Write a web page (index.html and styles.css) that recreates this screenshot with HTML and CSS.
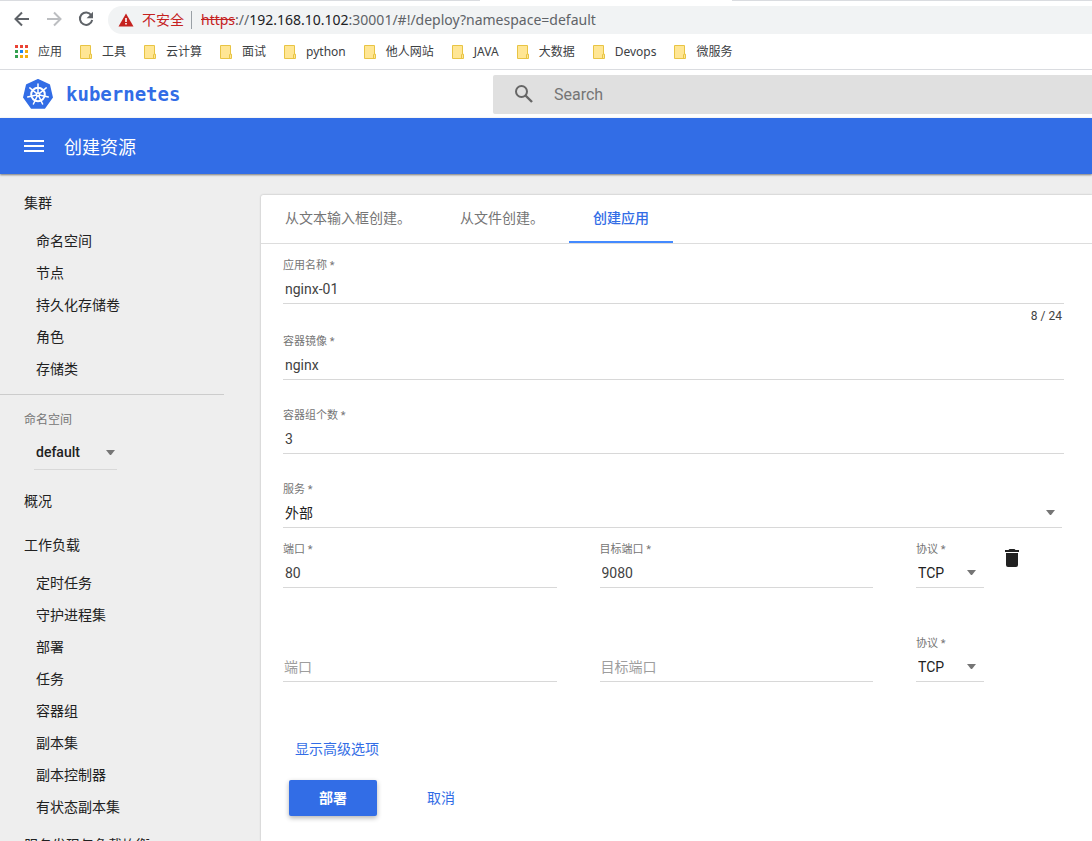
FILE: index.html
```html
<!DOCTYPE html>
<html lang="zh-CN">
<head>
<meta charset="utf-8">
<title>创建资源 - Kubernetes Dashboard</title>
<link rel="stylesheet" href="styles.css">
</head>
<body>
<svg class="sprite" aria-hidden="true">
  <symbol id="folder" viewBox="0 0 12 14"><path d="M.5.5h10v8.700h1v4.300H.5z" fill="#ffe694" stroke="#e8c444"/><path d="M9.500 13V9.500h1" fill="none" stroke="#e8c444"/></symbol>
</svg>
<div class="browser">
  <div class="tabstrip"><span></span><span></span></div>
  <div class="toolbar">
    <button class="nav" aria-label="后退"><svg viewBox="0 0 16 16"><path d="M15 8H2M8 1.500 1.500 8 8 14.500" fill="none" stroke="#5f6368" stroke-width="2"/></svg></button>
    <button class="nav" aria-label="前进"><svg viewBox="0 0 16 16"><path d="M1 8h13M8 1.500 14.500 8 8 14.500" fill="none" stroke="#bcbec1" stroke-width="2"/></svg></button>
    <button class="nav" aria-label="重新加载"><svg viewBox="0 0 16 16"><path d="M13.300 4.200A6.200 6.200 0 1 0 14.200 9" fill="none" stroke="#5f6368" stroke-width="2"/><path d="M15 .8v6.400H8.600z" fill="#5f6368"/></svg></button>
    <div class="omnibox">
      <svg class="warn" viewBox="0 0 16 14"><path d="M8 .5 15.500 13.500H.5z" fill="#c5221f"/><path d="M7.200 5h1.600v4H7.200zM7.200 10h1.600v1.600H7.200z" fill="#fff"/></svg>
      <span class="insecure">不安全</span>
      <span class="url"><s>https</s><span>://</span><b>192.168.10.102</b><span>:30001/#!/deploy?namespace=default</span></span>
    </div>
  </div>
  <nav class="bookmarks">
    <a href="#"><svg class="apps" viewBox="0 0 13 13"><path d="M0 0h3v3H0zM5 0h3v3H5zM10 0h3v3h-3z" fill="#ea4335"/><path d="M0 5h3v3H0zM0 10h3v3H0z" fill="#34a04f"/><path d="M5 5h3v3H5z" fill="#1a85f0"/><path d="M10 5h3v3h-3zM5 10h3v3H5zM10 10h3v3h-3z" fill="#f5ae0c"/></svg>应用</a>
    <a href="#"><svg><use href="#folder"/></svg>工具</a>
    <a href="#"><svg><use href="#folder"/></svg>云计算</a>
    <a href="#"><svg><use href="#folder"/></svg>面试</a>
    <a href="#"><svg><use href="#folder"/></svg>python</a>
    <a href="#"><svg><use href="#folder"/></svg>他人网站</a>
    <a href="#"><svg><use href="#folder"/></svg>JAVA</a>
    <a href="#"><svg><use href="#folder"/></svg>大数据</a>
    <a href="#"><svg><use href="#folder"/></svg>Devops</a>
    <a href="#"><svg><use href="#folder"/></svg>微服务</a>
  </nav>
</div>
<header class="brandbar">
  <a class="brand" href="#">
    <svg viewBox="0 0 30 30"><path d="M15 .8 26.300 6 29.200 18.300 21.500 29H8.500L.8 18.300 3.700 6z" fill="#326de6" stroke="#326de6" stroke-width="1.500" stroke-linejoin="round"/>
      <g fill="none" stroke="#fff" stroke-linecap="round"><circle cx="15" cy="15.500" r="6.800" stroke-width="2"/><circle cx="15" cy="15.500" r="1.600" stroke-width="1.500"/>
      <path stroke-width="1.500" d="M15 14V5M16.200 14.600l7-5.700M16.500 15.900l8.800 2M15.700 16.900l3.900 8.100M14.300 16.900l-3.900 8.100M13.500 15.900l-8.800 2M13.800 14.600 6.800 8.900"/></g></svg>
    <span>kubernetes</span>
  </a>
  <label class="search">
    <svg viewBox="0 0 18 18"><circle cx="6.500" cy="6.500" r="5.500" fill="none" stroke="#666" stroke-width="2"/><path d="M10.500 10.500 17 17" stroke="#666" stroke-width="2.400"/></svg>
    <input type="search" placeholder="Search" aria-label="Search">
  </label>
</header>
<div class="titlebar">
  <button class="menu" aria-label="菜单"><span></span><span></span><span></span></button>
  <h1>创建资源</h1>
</div>
<div class="page">
  <nav class="sidebar">
    <a class="head" href="#">集群</a>
    <a href="#">命名空间</a>
    <a href="#">节点</a>
    <a href="#">持久化存储卷</a>
    <a href="#">角色</a>
    <a href="#">存储类</a>
    <div class="namespace">
      <label for="ns">命名空间</label>
      <div class="pick"><select id="ns"><option>default</option></select></div>
    </div>
    <a class="head" href="#">概况</a>
    <a class="head" href="#">工作负载</a>
    <a href="#">定时任务</a>
    <a href="#">守护进程集</a>
    <a href="#">部署</a>
    <a href="#">任务</a>
    <a href="#">容器组</a>
    <a href="#">副本集</a>
    <a href="#">副本控制器</a>
    <a href="#">有状态副本集</a>
    <a class="head" href="#">服务发现与负载均衡</a>
  </nav>
  <main class="card">
    <div class="tabs" role="tablist">
      <button role="tab">从文本输入框创建。</button>
      <button role="tab">从文件创建。</button>
      <button role="tab" class="active" aria-selected="true">创建应用</button>
    </div>
    <form>
      <div class="field">
        <label for="name">应用名称 *</label>
        <input id="name" value="nginx-01">
        <div class="counter">8 / 24</div>
      </div>
      <div class="field"><label for="image">容器镜像 *</label><input id="image" value="nginx"></div>
      <div class="field"><label for="pods">容器组个数 *</label><input id="pods" value="3"></div>
      <div class="field service"><label for="svc">服务 *</label><div class="pick"><select id="svc"><option>外部</option></select></div></div>
      <div class="ports">
        <div class="field"><label for="p1">端口 *</label><input id="p1" value="80"></div>
        <div class="field"><label for="t1">目标端口 *</label><input id="t1" value="9080"></div>
        <div class="proto">
          <div class="field"><label for="r1">协议 *</label><div class="pick"><select id="r1"><option>TCP</option></select></div></div>
          <button type="button" class="trash" aria-label="删除"><svg viewBox="0 0 14 18"><path d="M1 4v12a2 2 0 0 0 2 2h8a2 2 0 0 0 2-2V4zM0 1h3.500l1-1h5l1 1H14v2H0z" fill="#212121"/></svg></button>
        </div>
      </div>
      <div class="ports">
        <div class="field bare"><input aria-label="端口" placeholder="端口"></div>
        <div class="field bare"><input aria-label="目标端口" placeholder="目标端口"></div>
        <div class="proto">
          <div class="field"><label for="r2">协议 *</label><div class="pick"><select id="r2"><option>TCP</option></select></div></div>
        </div>
      </div>
      <button type="button" class="flat more">显示高级选项</button>
      <div class="actions">
        <button type="submit" class="primary">部署</button>
        <button type="button" class="flat">取消</button>
      </div>
    </form>
  </main>
</div>
</body>
</html>
```
FILE: styles.css
```css
* { box-sizing: border-box; }
body {
  margin: 0;
  height: 100vh;
  display: flex;
  flex-direction: column;
  overflow: hidden;
  background: #eee;
  color: #212121;
  font: 14px/20px Roboto, "Noto Sans CJK SC", sans-serif;
}
button, input, select {
  font: inherit;
  color: inherit;
  background: none;
  border: 0;
  padding: 0;
  margin: 0;
  border-radius: 0;
  outline: 0;
  min-width: 0;
}
select { appearance: none; }
a { color: inherit; text-decoration: none; }
svg { display: block; flex: none; }
.sprite { display: none; }

/* Browser frame */
.browser {
  flex: none;
  background: #fff;
  border-bottom: 1px solid #dadce0;
  font-family: "Noto Sans", "Noto Sans CJK SC", sans-serif;
}
.tabstrip { display: flex; justify-content: space-between; height: 1px; }
.tabstrip span { background: #dadce0; width: 44%; }
.tabstrip span + span { width: 33%; }
.toolbar { display: flex; align-items: center; gap: 16px; height: 36px; padding-left: 14px; }
.nav svg { width: 16px; height: 16px; }
.omnibox {
  flex: 1;
  display: flex;
  align-items: center;
  height: 28px;
  margin: 1px 0 0 -2px;
  padding-left: 10px;
  border-radius: 14px 0 0 14px;
  background: #f1f3f4;
  white-space: nowrap;
}
.omnibox span { line-height: 18px; }
.warn { width: 16px; height: 14px; }
.insecure { margin-left: 8px; padding-right: 7px; border-right: 1px solid #9aa0a6; color: #c5221f; }
.url { margin-left: 9px; color: #5f6368; }
.url s { color: #c5221f; }
.url b { font-weight: 400; color: #202124; }
.bookmarks { display: flex; gap: 18px; height: 32px; padding: 0 0 3px 15px; font-size: 12px; color: #3c4043; white-space: nowrap; }
.bookmarks a { display: flex; align-items: center; gap: 10px; }
.bookmarks svg { width: 12px; height: 14px; }
.bookmarks .apps { width: 13px; height: 13px; }

/* Dashboard header */
.brandbar { flex: none; display: flex; justify-content: space-between; align-items: center; height: 48px; background: #fff; }
.brand { display: flex; align-items: center; gap: 13px; padding-left: 23px; color: #326de6; font: bold 19px/24px "DejaVu Sans Mono", monospace; }
.brand svg { width: 30px; height: 30px; }
.search {
  display: flex;
  align-items: center;
  gap: 21px;
  width: 599px;
  height: 39px;
  padding-left: 22px;
  border-radius: 2px 0 0 2px;
  background: #e0e0e0;
}
.search svg { width: 18px; height: 18px; }
.search input { flex: 1; padding-top: 2px; font-size: 16px; }
.search input::placeholder { color: #757575; }
.titlebar {
  flex: none;
  display: flex;
  align-items: center;
  gap: 20px;
  height: 56px;
  padding-left: 24px;
  background: #326de6;
  color: #fff;
  box-shadow: 0 1px 2px rgba(0, 0, 0, .5);
  z-index: 1;
}
.menu { display: grid; gap: 3px; width: 20px; }
.menu span { height: 2px; background: #fff; }
h1 { margin: 0; padding-top: 3px; font-size: 18px; line-height: 24px; font-weight: 400; }
.page { flex: 1; display: flex; min-height: 0; }

/* Side navigation */
.sidebar { flex: none; width: 261px; padding-top: 7px; overflow: hidden; }
.sidebar > a { display: block; padding-left: 36px; line-height: 32px; }
.sidebar > .head { padding-left: 24px; line-height: 44px; }
.namespace { width: 224px; margin: 9px 0; padding: 15px 0 0 24px; border-top: 1px solid #ccc; }
.namespace label { display: block; font-size: 12px; color: #757575; }
.namespace .pick { width: 83px; height: 35px; margin: 5px 0 0 10px; font-weight: 500; }

/* Select with a drop arrow */
.pick { display: grid; grid-template-columns: minmax(0, 1fr) 9px; align-items: center; height: 30px; padding: 0 2px; border-bottom: 1px solid #d8d8d8; }
.pick select { grid-area: 1 / 1 / 2 / 3; width: 100%; height: 100%; }
.pick::after { content: ""; grid-area: 1 / 2; border: 4px solid transparent; border-top: 5px solid #757575; border-bottom: 0; pointer-events: none; }

/* Form card */
.card { flex: 1; margin-top: 21px; background: #fff; border-radius: 2px 0 0 0; box-shadow: 0 0 2px rgba(0, 0, 0, .3); }
.tabs { display: flex; gap: 1px; border-bottom: 1px solid #ddd; color: #757575; }
.tabs button { height: 48px; padding: 0 24px; border-bottom: 2px solid transparent; }
.tabs .active { color: #326de6; border-color: #448aff; font-weight: 500; }
form { padding: 13px 28px 0 22px; }
.field { display: grid; margin-bottom: 27px; }
.field label { padding-top: 1px; font-size: 11px; line-height: 16px; color: #757575; }
.field input { height: 30px; padding: 1px 2px 0; border-bottom: 1px solid #d8d8d8; color: #424242; }
.field input::placeholder { color: #9e9e9e; }
.field select { padding-top: 1px; }
.counter { height: 29px; padding: 2px 2px 0 0; text-align: right; font-size: 12px; color: #424242; }
.field:has(.counter) { margin-bottom: 0; }
.service { margin: 0 2px 13px 0; }
.service .pick { padding-right: 7px; }
.ports { display: grid; grid-template-columns: 1fr 1fr 148px; column-gap: 43px; margin-bottom: 47px; }
.ports .field { margin: 0; }
.bare { align-content: end; }
.field.bare input { padding-left: 1px; }
.proto { display: flex; gap: 21px; align-items: start; }
.proto .field { width: 68px; }
.proto .pick { padding-right: 8px; }
.trash { padding-top: 8px; }
.trash svg { width: 14px; height: 18px; }
.flat { height: 36px; color: #326de6; }
.more { margin-left: 12px; margin-top: 2px; }
.actions { display: flex; gap: 50px; margin: 13px 0 25px 6px; }
.primary { width: 88px; height: 36px; border-radius: 2px; background: #326de6; color: #fff; font-weight: 700; box-shadow: 0 2px 5px rgba(0, 0, 0, .3); }
```
